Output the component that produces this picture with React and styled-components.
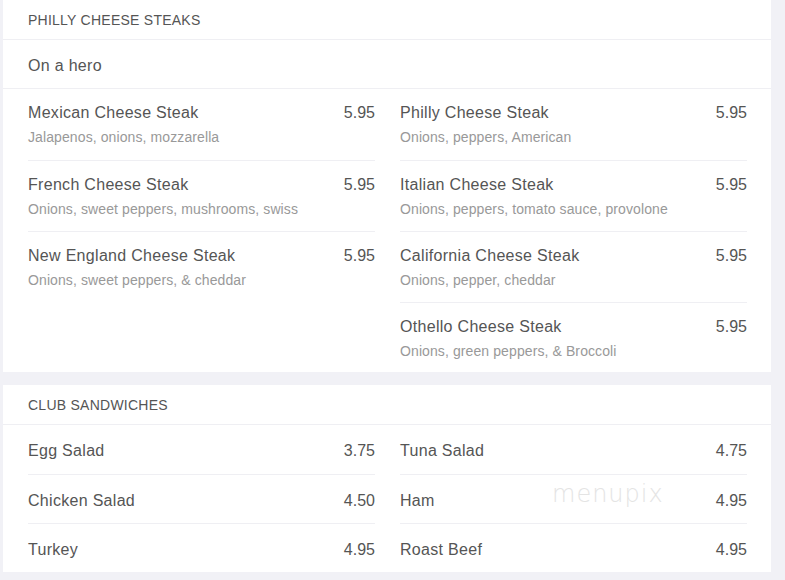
import React from "react";
import styled, { createGlobalStyle } from "styled-components";

const GlobalStyle = createGlobalStyle`
  body {
    margin: 0;
    background: #f1f1f6;
    font-family: "Liberation Sans", Arial, sans-serif;
  }
`;

const steaks = [
  [
    { name: "Mexican Cheese Steak", desc: "Jalapenos, onions, mozzarella", price: "5.95" },
    { name: "French Cheese Steak", desc: "Onions, sweet peppers, mushrooms, swiss", price: "5.95" },
    { name: "New England Cheese Steak", desc: "Onions, sweet peppers, & cheddar", price: "5.95" },
  ],
  [
    { name: "Philly Cheese Steak", desc: "Onions, peppers, American", price: "5.95" },
    { name: "Italian Cheese Steak", desc: "Onions, peppers, tomato sauce, provolone", price: "5.95" },
    { name: "California Cheese Steak", desc: "Onions, pepper, cheddar", price: "5.95" },
    { name: "Othello Cheese Steak", desc: "Onions, green peppers, & Broccoli", price: "5.95" },
  ],
];

const clubs = [
  [
    { name: "Egg Salad", price: "3.75" },
    { name: "Chicken Salad", price: "4.50" },
    { name: "Turkey", price: "4.95" },
  ],
  [
    { name: "Tuna Salad", price: "4.75" },
    { name: "Ham", price: "4.95" },
    { name: "Roast Beef", price: "4.95" },
  ],
];

const Section = ({ title, note, columns, compact }) => (
  <SCard>
    <SHeader>{title}</SHeader>
    {note && <SNote>{note}</SNote>}
    <SGrid>
      {columns.map((col, ci) => (
        <SColumn key={ci}>
          {col.map(item => (
            <SItem key={item.name} $compact={compact}>
              <SItemTop>
                <SName>{item.name}</SName>
                <SPrice>{item.price}</SPrice>
              </SItemTop>
              {item.desc && <SDesc>{item.desc}</SDesc>}
            </SItem>
          ))}
        </SColumn>
      ))}
    </SGrid>
  </SCard>
);

const App = () => {
  return (
    <SPage>
      <GlobalStyle />
      <Section title="Philly Cheese Steaks" note="On a hero" columns={steaks} />
      <SCardWrap>
        <Section title="Club Sandwiches" columns={clubs} compact />
        {/* watermark over the club list */}
        <SWatermark>menupix</SWatermark>
      </SCardWrap>
    </SPage>
  );
};

const SPage = styled.div`
  width: 768px;
  padding: 0 14px 0 3px;
  display: flex;
  flex-direction: column;
  gap: 13px;
`;
const SCardWrap = styled.div`
  position: relative;
`;
const SCard = styled.div`
  background: #fff;
`;
const SHeader = styled.div`
  height: 39px;
  padding: 0 25px;
  display: flex;
  align-items: center;
  border-bottom: 1px solid #efeff3;
  font-size: 14px;
  letter-spacing: 0.25px;
  text-transform: uppercase;
  color: #555;
`;
const SNote = styled.div`
  box-sizing: border-box;
  height: 49px;
  padding: 3px 25px 0;
  display: flex;
  align-items: center;
  border-bottom: 1px solid #efeff3;
  font-size: 16px;
  letter-spacing: 0.3px;
  color: #555;
`;
const SGrid = styled.div`
  display: grid;
  grid-template-columns: 347px 347px;
  column-gap: 25px;
  padding: 0 24px 0 25px;
`;
const SColumn = styled.div`
  display: flex;
  flex-direction: column;
`;
const SItem = styled.div`
  box-sizing: border-box;
  height: ${p => (p.$compact ? "49px" : "71px")};
  padding-top: ${p => (p.$compact ? "16px" : "14px")};
  & + & {
    border-top: 1px solid #efeff3;
  }
  &:nth-child(4) {
    height: 70px;
  }
`;
const SItemTop = styled.div`
  display: flex;
  justify-content: space-between;
  font-size: 16px;
  line-height: 20px;
  letter-spacing: 0.3px;
  color: #555;
`;
const SName = styled.span``;
const SPrice = styled.span`
  letter-spacing: 0;
`;
const SDesc = styled.div`
  margin-top: 4px;
  font-size: 14px;
  line-height: 20px;
  color: #999;
  letter-spacing: 0.1px;
`;
const SWatermark = styled.div`
  position: absolute;
  left: 549px;
  top: 95px;
  font-family: "DejaVu Sans", sans-serif;
  font-weight: 200;
  font-size: 24px;
  letter-spacing: 1px;
  color: #e4e4e4;
  pointer-events: none;
`;

export default App;
